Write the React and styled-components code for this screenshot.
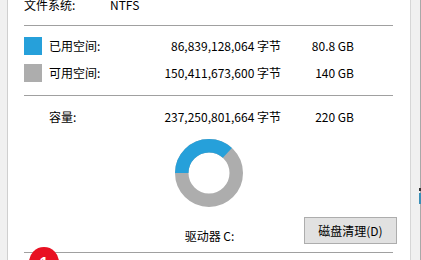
import React from 'react';
import styled, { createGlobalStyle } from 'styled-components';

const GlobalStyle = createGlobalStyle`
  html, body {
    margin: 0;
    padding: 0;
    width: 421px;
    height: 260px;
    overflow: hidden;
    background: #ffffff;
    font-family: "Noto Sans CJK SC", "Noto Sans", sans-serif;
    font-size: 12px;
    color: #000000;
  }
`;

const Frame = styled.div`
  position: relative;
  display: flex;
  width: 421px;
  height: 260px;
  overflow: hidden;
`;

const LeftStrip = styled.div`
  width: 7px;
  background: #f0f0f0;
  border-right: 1px solid #cfcfcf;
`;

const RightStrip = styled.div`
  position: relative;
  width: 9px;
  background: #f0f0f0;
  border-left: 1px solid #d6d6d6;
  border-right: 1px solid #a8a8a8;
`;

const EdgeMark = styled.div`
  position: absolute;
  right: -1px;
  top: 188px;
  width: 2px;
  height: 16px;
  background: linear-gradient(#333 0 3px, transparent 3px 5px, #3a8fb7 5px);
`;

const Panel = styled.div`
  width: 402px;
  background: #ffffff;
`;

const Content = styled.div`
  margin-top: -3px;
  padding: 0 17px 0 16px;
`;

const InfoRow = styled.div`
  display: flex;
  height: 16px;
  line-height: 16px;
  white-space: nowrap;
`;

const InfoLabel = styled.div`
  width: 86px;
`;

const Separator = styled.div`
  height: 1px;
  background: #a0a0a0;
  margin-top: ${p => p.$top}px;
`;

const DataGrid = styled.div`
  display: grid;
  grid-template-columns: 25px 86px 146px 73px;
  grid-auto-rows: ${p => p.$row}px;
  align-items: center;
  margin-top: ${p => p.$top}px;
  white-space: nowrap;
  line-height: 16px;
`;

const Swatch = styled.div`
  width: 18px;
  height: 18px;
  background: ${p => p.$color};
`;

const Label = styled.div`
  grid-column: ${p => (p.$wide ? '1 / 3' : 'auto')};
  padding-left: ${p => (p.$wide ? '25px' : '0')};
`;

const Num = styled.div`
  text-align: right;
`;

const ChartWrap = styled.div`
  display: flex;
  justify-content: center;
  margin-top: 14px;
  height: 68px;
`;

const BottomRow = styled.div`
  display: grid;
  grid-template-columns: 1fr auto 1fr;
  align-items: end;
  margin-top: 10px;
  height: 27px;
`;

const DriveName = styled.div`
  grid-column: 2;
  line-height: 16px;
  white-space: nowrap;
  padding-left: 2px;
`;

const CleanButton = styled.button`
  grid-column: 3;
  justify-self: end;
  margin-right: -4px;
  width: 93px;
  height: 27px;
  background: #e1e1e1;
  border: 1px solid #adadad;
  font-family: inherit;
  font-size: 12px;
  color: #000;
  padding: 0;
`;

const Badge = styled.div`
  position: absolute;
  left: 29px;
  top: 247px;
  width: 30px;
  height: 30px;
  border-radius: 50%;
  background: #e81123;
  color: #fff;
  font-family: "Liberation Sans", sans-serif;
  font-weight: bold;
  font-size: 16px;
  line-height: 30px;
  padding-top: 2px;
  box-sizing: border-box;
  text-align: center;
`;

function Donut({ used, total }) {
  const r = 27.25;
  const c = 2 * Math.PI * r;
  const len = (used / total) * c;
  return (
    <svg width="68" height="68" viewBox="0 0 68 68">
      <circle cx="34" cy="34" r={r} fill="none" stroke="#adadad" strokeWidth="13.5" />
      <circle
        cx="34"
        cy="34"
        r={r}
        fill="none"
        stroke="#26a0da"
        strokeWidth="13.5"
        strokeDasharray={`${len} ${c}`}
        transform="rotate(180 34 34)"
      />
    </svg>
  );
}

export default function App() {
  return (
    <>
      <GlobalStyle />
      <Frame>
        <LeftStrip />
        <Panel>
          <Content>
            <InfoRow>
              <InfoLabel>文件系统:</InfoLabel>
              <div>NTFS</div>
            </InfoRow>
            <Separator $top={12} />
            <DataGrid $row={27} $top={6}>
              <Swatch $color="#26a0da" />
              <Label>已用空间:</Label>
              <Num>86,839,128,064 字节</Num>
              <Num>80.8 GB</Num>
              <Swatch $color="#adadad" />
              <Label>可用空间:</Label>
              <Num>150,411,673,600 字节</Num>
              <Num>140 GB</Num>
            </DataGrid>
            <Separator $top={9} />
            <DataGrid $row={16} $top={13}>
              <Label $wide>容量:</Label>
              <Num>237,250,801,664 字节</Num>
              <Num>220 GB</Num>
            </DataGrid>
            <ChartWrap>
              <Donut used={80.8} total={220} />
            </ChartWrap>
            <BottomRow>
              <DriveName>驱动器 C:</DriveName>
              <CleanButton>磁盘清理(D)</CleanButton>
            </BottomRow>
            <Separator $top={8} />
          </Content>
        </Panel>
        <RightStrip>
          <EdgeMark />
        </RightStrip>
        <Badge>1</Badge>
      </Frame>
    </>
  );
}
